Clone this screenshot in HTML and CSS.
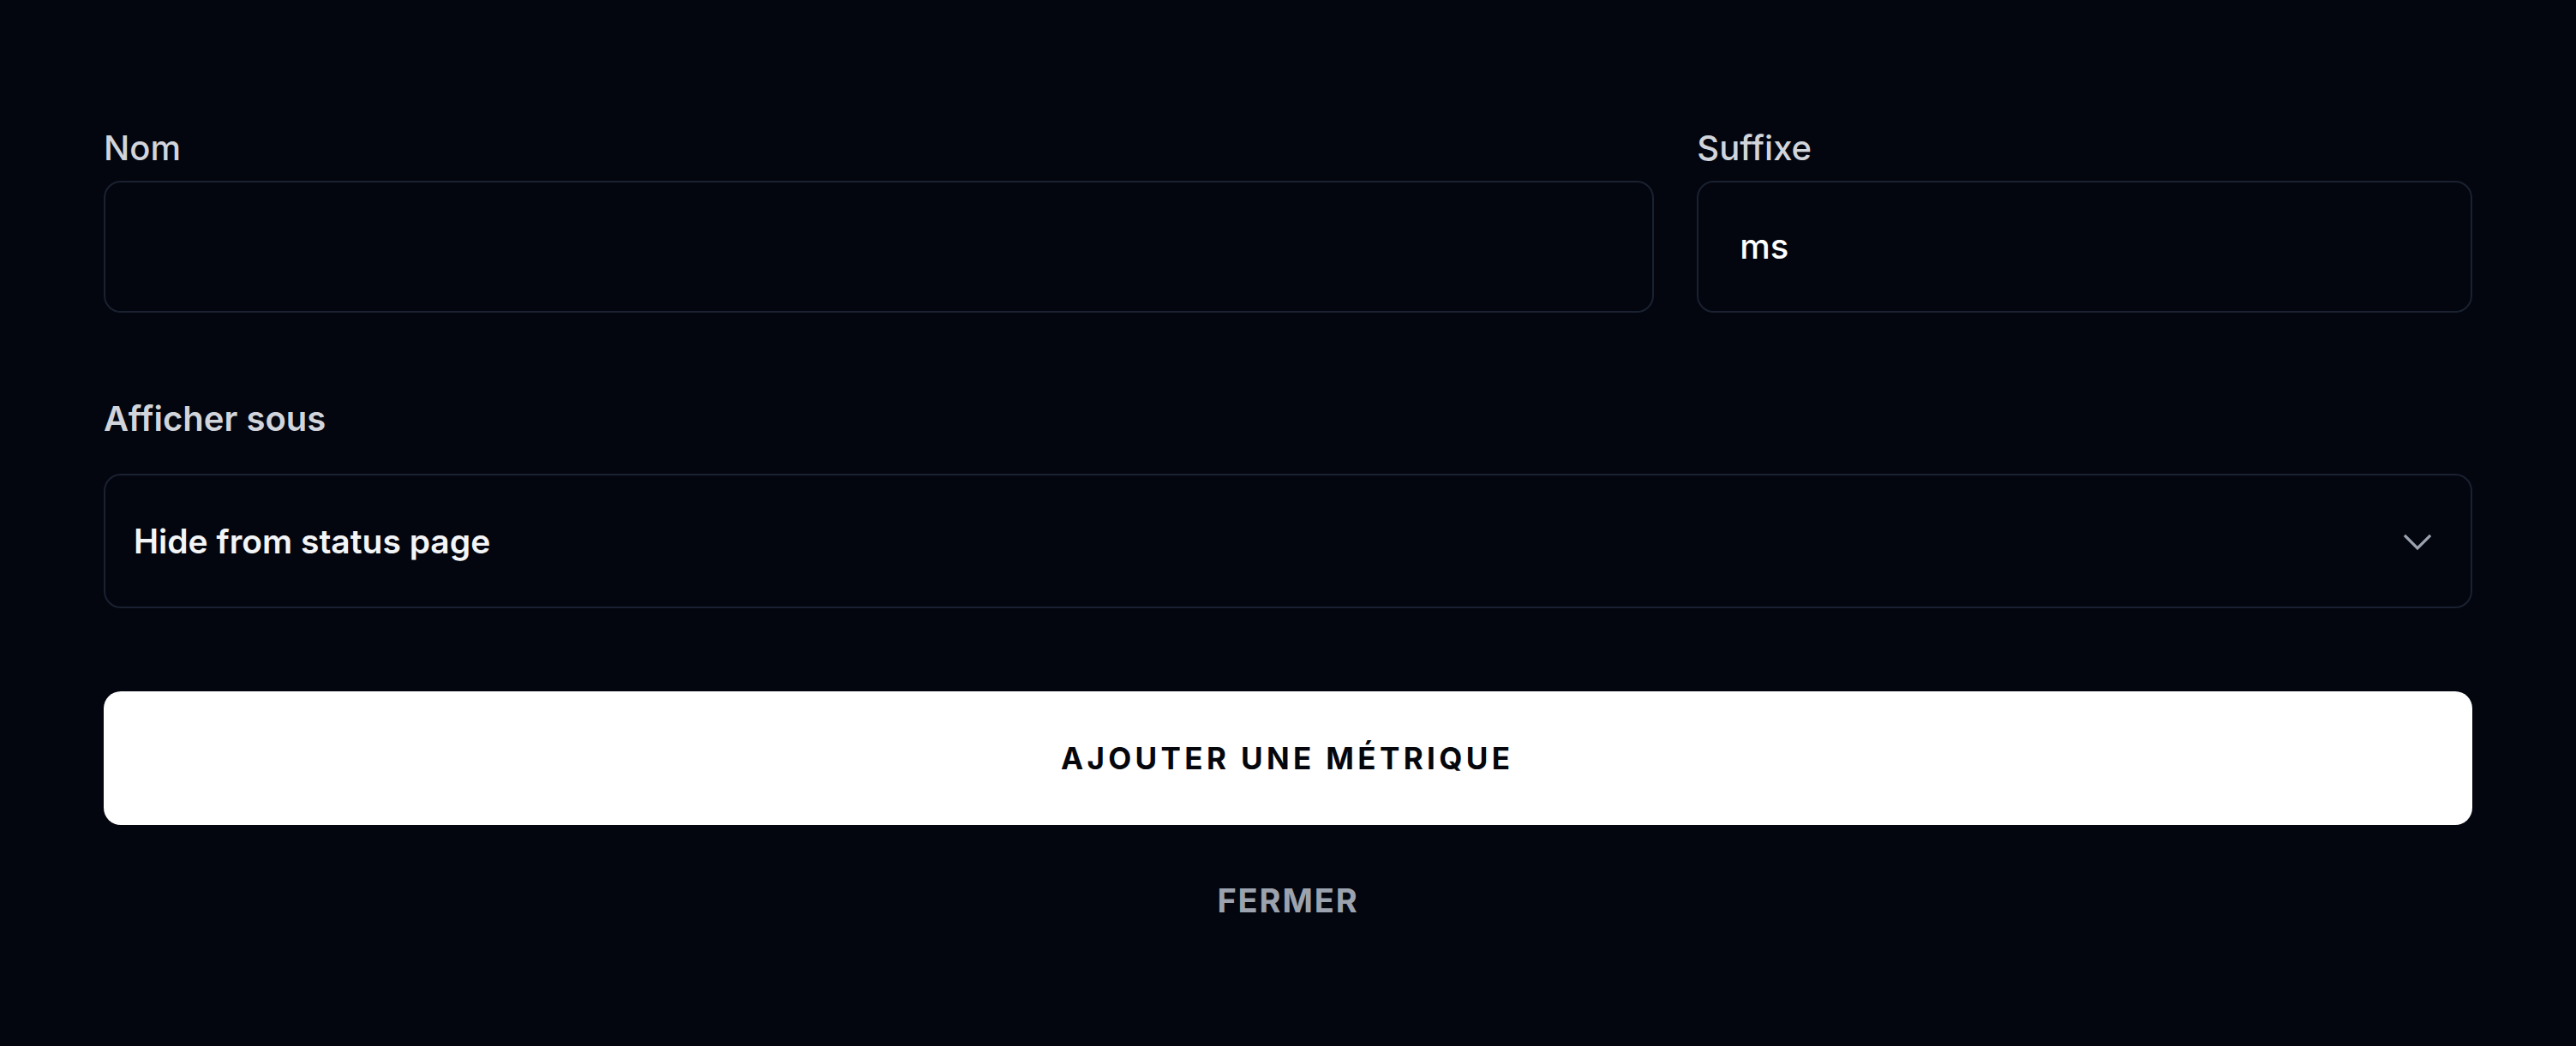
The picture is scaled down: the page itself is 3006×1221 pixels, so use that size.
FILE: index.html
```html
<!DOCTYPE html>
<html lang="fr">
<head>
<meta charset="utf-8">
<title>Ajouter une métrique</title>
<link rel="stylesheet" href="styles.css">
</head>
<body>
<form class="metric-form">
  <div class="row-two">
    <div class="field">
      <label class="label">Nom</label>
      <div class="input"></div>
    </div>
    <div class="field">
      <label class="label">Suffixe</label>
      <div class="input input-suffix"><span class="value">ms</span></div>
    </div>
  </div>
  <div class="field field-select">
    <label class="label label-strong">Afficher sous</label>
    <div class="select">
      <span class="select-value">Hide from status page</span>
      <svg class="chevron" width="32" height="20" viewBox="0 0 32 20" fill="none" stroke="#9ca3af" stroke-width="3.2" stroke-linecap="square" stroke-linejoin="miter"><path d="M2 2 L16 16 L30 2"/></svg>
    </div>
  </div>
  <button type="button" class="btn-primary">AJOUTER UNE MÉTRIQUE</button>
  <button type="button" class="btn-link">FERMER</button>
</form>
</body>
</html>
```
FILE: styles.css
```css
html, body {
  margin: 0;
  padding: 0;
  background: #03060f;
}
body {
  font-family: Inter, "Noto Sans", "Liberation Sans", sans-serif;
  width: 3006px;
  height: 1221px;
}
.metric-form {
  padding: 149px 121px 0 121px;
  display: flex;
  flex-direction: column;
}
.row-two {
  display: grid;
  grid-template-columns: 2fr 1fr;
  gap: 50px;
}
.field {
  display: flex;
  flex-direction: column;
}
.label {
  font-size: 40px;
  line-height: 48px;
  font-weight: 500;
  color: #d1d5db;
  margin-bottom: 14px;
}
.label-strong {
  font-weight: 600;
  margin-bottom: 40px;
}
.field-select {
  margin-top: 100px;
}
.input {
  height: 154px;
  box-sizing: border-box;
  border: 2px solid #1a2130;
  border-radius: 20px;
  background: #03060f;
  display: flex;
  align-items: center;
}
.input-suffix {
  padding-left: 48px;
}
.value {
  font-size: 40px;
  font-weight: 500;
  color: #ffffff;
  margin-top: -2px;
}
.select {
  height: 157px;
  box-sizing: border-box;
  border: 2px solid #1a2130;
  border-radius: 20px;
  display: flex;
  align-items: center;
  justify-content: space-between;
  padding: 0 46px 0 33px;
}
.select-value {
  font-size: 39px;
  font-weight: 600;
  color: #f3f4f6;
}
.chevron {
  display: block;
  margin-top: 4px;
}
.btn-primary {
  margin-top: 97px;
  height: 156px;
  border: none;
  border-radius: 20px;
  background: #ffffff;
  color: #05070d;
  font-family: Inter, "Noto Sans", "Liberation Sans", sans-serif;
  font-size: 35px;
  font-weight: 700;
  letter-spacing: 0.125em;
  padding-left: 0.125em;
  cursor: pointer;
}
.btn-link {
  align-self: center;
  margin-top: 64px;
  border: none;
  background: transparent;
  color: #9ca3af;
  font-family: Inter, "Noto Sans", "Liberation Sans", sans-serif;
  font-size: 38px;
  font-weight: 700;
  letter-spacing: 0.05em;
  padding: 0;
  line-height: 48px;
}
```
